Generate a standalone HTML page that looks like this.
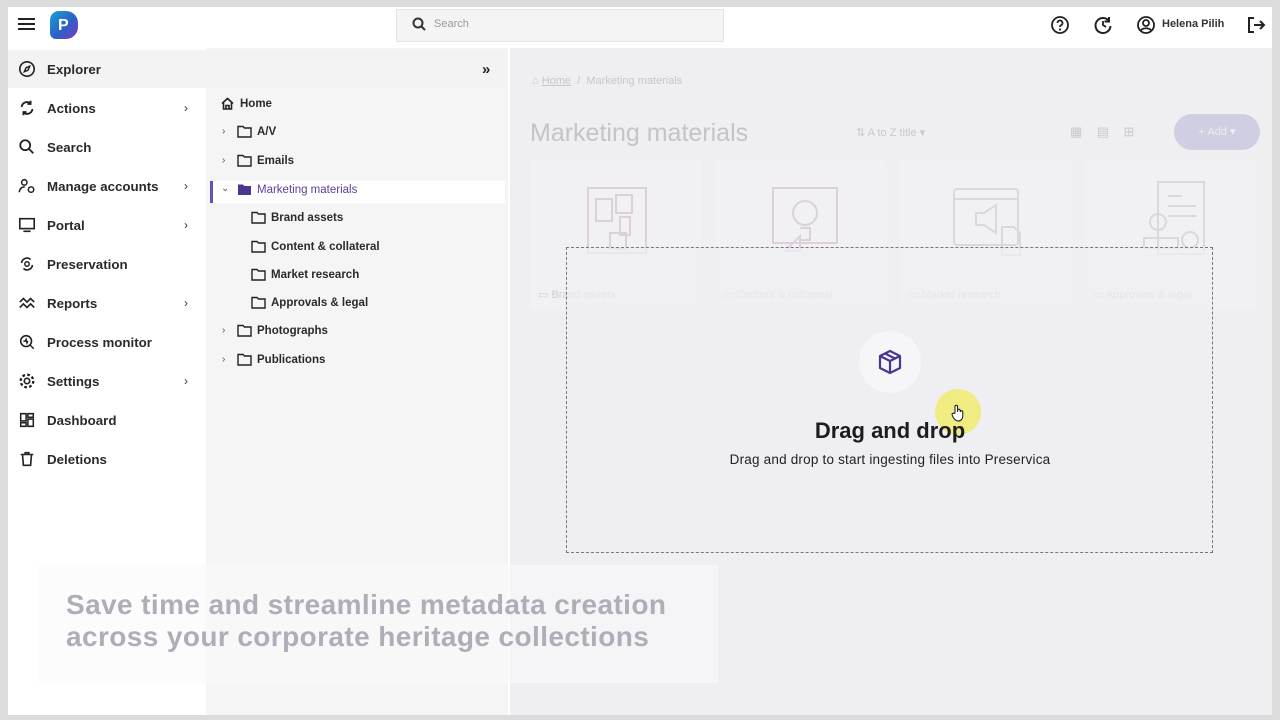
<!DOCTYPE html>
<html><head><meta charset="utf-8">
<style>
*{box-sizing:border-box;margin:0;padding:0}
body{width:1280px;height:720px;background:#dcdcdc;font-family:"Liberation Sans",sans-serif;position:relative;overflow:hidden;color:#222}
.abs{position:absolute}
#frame{left:8px;top:7px;width:1264px;height:708px;background:#fff;overflow:hidden}
.hdr{left:0;top:0;width:1264px;height:41px;background:#fff}
.nav{left:0;top:41px;width:198px;height:667px;background:#fff}
.tree{left:198px;top:41px;width:302px;height:667px;background:#f5f5f6}
.main{left:502px;top:41px;width:762px;height:667px;background:#efeff1}
.ni{position:absolute;left:10px;font-size:13.3px;font-weight:bold;color:#2a2a2a;display:flex;align-items:center}
.ni svg{width:18px;height:18px;margin-right:11px}
.chev{position:absolute;left:176px;font-size:12px;color:#333}
.ti{position:absolute;font-size:11.5px;font-weight:bold;color:#2a2a2a;display:flex;align-items:center}
.ti svg{width:15px;height:13px;margin-right:5px}
.tc{position:absolute;font-size:10px;color:#555}
.card{position:absolute;top:112px;width:172px;height:150px;border-radius:4px;background:#f1f1f3}
.cl{position:absolute;top:240px;font-size:11px;color:#cdcdd2}
</style></head><body>
<div id="frame" class="abs">
 <div class="abs hdr">
  <svg class="abs" style="left:10px;top:10px" width="17" height="14"><path d="M0 2h17M0 7h17M0 12h17" stroke="#222" stroke-width="2"/></svg>
  <div class="abs" style="left:42px;top:4px;width:28px;height:28px;border-radius:9px 12px 12px 6px;background:linear-gradient(135deg,#18a3d8,#2c5fc8 55%,#7b3bbf)"></div>
  <div class="abs" style="left:50px;top:10px;color:#fff;font-weight:bold;font-size:16px">P</div>
  <div class="abs" style="left:388px;top:2px;width:328px;height:33px;background:#f4f4f5;border:1px solid #e4e4e6"></div>
  <svg class="abs" style="left:404px;top:10px" width="14" height="14"><circle cx="6" cy="6" r="4.5" stroke="#333" stroke-width="2" fill="none"/><path d="M9.5 9.5L13 13" stroke="#333" stroke-width="2"/></svg>
  <div class="abs" style="left:426px;top:11px;font-size:11px;color:#999">Search</div>
  <svg class="abs" style="left:1042px;top:8px" width="20" height="20"><circle cx="10" cy="10" r="8" stroke="#222" stroke-width="1.8" fill="none"/><path d="M7.5 8a2.5 2.5 0 1 1 3.5 2.3c-.8.4-1 .9-1 1.7" stroke="#222" stroke-width="1.8" fill="none"/><circle cx="10" cy="14.5" r="1.1" fill="#222"/></svg>
  <svg class="abs" style="left:1085px;top:8px" width="20" height="20"><path d="M16 6A7.5 7.5 0 1 0 17.5 11" stroke="#222" stroke-width="2" fill="none"/><path d="M16 2v4.5h-4.5" stroke="#222" stroke-width="2" fill="none"/><path d="M10 6v4l3 2" stroke="#222" stroke-width="1.8" fill="none"/></svg>
  <svg class="abs" style="left:1128px;top:8px" width="20" height="20"><circle cx="10" cy="10" r="8" stroke="#222" stroke-width="1.8" fill="none"/><circle cx="10" cy="8" r="3" stroke="#222" stroke-width="1.8" fill="none"/><path d="M4.5 15.5c3-3 8-3 11 0" stroke="#222" stroke-width="1.8" fill="none"/></svg>
  <div class="abs" style="left:1154px;top:11px;font-size:11px;font-weight:bold;color:#333">Helena Pilih</div>
  <svg class="abs" style="left:1238px;top:8px" width="20" height="20"><path d="M8 3H3v14h5" stroke="#222" stroke-width="2" fill="none"/><path d="M8 10h10M14 6l4 4-4 4" stroke="#222" stroke-width="2" fill="none"/></svg>
 </div>
 <div class="abs nav"></div>
 <div class="abs tree"></div>
 <div class="abs" style="left:0;top:43px;width:500px;height:38px;background:#f3f3f4"></div>
 <div class="abs" style="left:474px;top:54px;font-size:15px;font-weight:bold">»</div>
 <div class="ni" style="top:53px"><svg viewBox="0 0 20 20"><circle cx="10" cy="10" r="8" stroke="#222" stroke-width="1.8" fill="none"/><path d="M13 7l-2 4.5L7 13l2-4.5z" stroke="#222" stroke-width="1.6" fill="none"/></svg>Explorer</div>
 <div class="ni" style="top:92px"><svg viewBox="0 0 20 20"><path d="M4 9a6 6 0 0 1 10-4M16 11a6 6 0 0 1-10 4" stroke="#222" stroke-width="2" fill="none"/><path d="M14 2v3.5h-3.5M6 18v-3.5h3.5" stroke="#222" stroke-width="2" fill="none"/></svg>Actions</div><div class="chev" style="top:94px">›</div>
 <div class="ni" style="top:131px"><svg viewBox="0 0 20 20"><circle cx="8" cy="8" r="5.5" stroke="#222" stroke-width="2" fill="none"/><path d="M12 12l5 5" stroke="#222" stroke-width="2"/></svg>Search</div>
 <div class="ni" style="top:170px"><svg viewBox="0 0 20 20"><circle cx="7" cy="6" r="3" stroke="#222" stroke-width="1.7" fill="none"/><path d="M1.5 17c0-4 3-6 6-6" stroke="#222" stroke-width="1.7" fill="none"/><circle cx="14.5" cy="14" r="3" stroke="#222" stroke-width="1.7" fill="none"/></svg>Manage accounts</div><div class="chev" style="top:172px">›</div>
 <div class="ni" style="top:209px"><svg viewBox="0 0 20 20"><rect x="2" y="3" width="16" height="11" stroke="#222" stroke-width="1.8" fill="none"/><path d="M6 17h8" stroke="#222" stroke-width="1.8"/></svg>Portal</div><div class="chev" style="top:211px">›</div>
 <div class="ni" style="top:248px"><svg viewBox="0 0 20 20"><path d="M4 9a6 6 0 0 1 10-4M16 11a6 6 0 0 1-10 4" stroke="#222" stroke-width="1.8" fill="none"/><circle cx="10" cy="10" r="2.5" stroke="#222" stroke-width="1.6" fill="none"/></svg>Preservation</div>
 <div class="ni" style="top:287px"><svg viewBox="0 0 20 20"><path d="M2 9l4-4 4 4 4-4 4 4M2 15l4-4 4 4 4-4 4 4" stroke="#222" stroke-width="1.8" fill="none"/></svg>Reports</div><div class="chev" style="top:289px">›</div>
 <div class="ni" style="top:326px"><svg viewBox="0 0 20 20"><circle cx="9" cy="9" r="6" stroke="#222" stroke-width="1.8" fill="none"/><path d="M13.5 13.5l4 4M6 9h2l1-2 1 4 1-2" stroke="#222" stroke-width="1.6" fill="none"/></svg>Process monitor</div>
 <div class="ni" style="top:365px"><svg viewBox="0 0 20 20"><circle cx="10" cy="10" r="3" stroke="#222" stroke-width="1.8" fill="none"/><circle cx="10" cy="10" r="7" stroke="#222" stroke-width="2.6" stroke-dasharray="3 2.5" fill="none"/></svg>Settings</div><div class="chev" style="top:367px">›</div>
 <div class="ni" style="top:404px"><svg viewBox="0 0 20 20"><path d="M3 3h6v8H3zM11 3h6v4h-6zM11 9h6v8h-6zM3 13h6v4H3z" stroke="#222" stroke-width="1.7" fill="none"/></svg>Dashboard</div>
 <div class="ni" style="top:443px"><svg viewBox="0 0 20 20"><path d="M3 5h14M8 5V3h4v2M5 5l1 12h8l1-12" stroke="#222" stroke-width="1.8" fill="none"/></svg>Deletions</div>

 <div class="ti" style="left:212px;top:90px"><svg viewBox="0 0 15 13"><path d="M2 6.5L7.5 1.5 13 6.5M3.5 5.5V12h8V5.5M6 12V8.5h3V12" stroke="#222" stroke-width="1.6" fill="none"/></svg>Home</div>
 <div class="abs" style="left:202px;top:174px;width:295px;height:22px;background:#fff;border-left:3px solid #6a4fb5"></div>
 <div class="tc" style="left:214px;top:119px">›</div><div class="ti" style="left:229px;top:118px"><svg viewBox="0 0 15 13"><path d="M1 1.5h5l1.5 1.5H14v9H1z" stroke="#222" stroke-width="1.4" fill="none"/></svg>A/V</div>
 <div class="tc" style="left:214px;top:148px">›</div><div class="ti" style="left:229px;top:147px"><svg viewBox="0 0 15 13"><path d="M1 1.5h5l1.5 1.5H14v9H1z" stroke="#222" stroke-width="1.4" fill="none"/></svg>Emails</div>
 <div class="tc" style="left:213px;top:176px">⌄</div><div class="ti" style="left:229px;top:176px;color:#5a3f9e;font-weight:normal"><svg viewBox="0 0 15 13"><path d="M1 1.5h5l1.5 1.5H14v9H1z" fill="#4a3590"/></svg>Marketing materials</div>
 <div class="ti" style="left:243px;top:204px"><svg viewBox="0 0 15 13"><path d="M1 1.5h5l1.5 1.5H14v9H1z" stroke="#222" stroke-width="1.4" fill="none"/></svg>Brand assets</div>
 <div class="ti" style="left:243px;top:233px"><svg viewBox="0 0 15 13"><path d="M1 1.5h5l1.5 1.5H14v9H1z" stroke="#222" stroke-width="1.4" fill="none"/></svg>Content &amp; collateral</div>
 <div class="ti" style="left:243px;top:261px"><svg viewBox="0 0 15 13"><path d="M1 1.5h5l1.5 1.5H14v9H1z" stroke="#222" stroke-width="1.4" fill="none"/></svg>Market research</div>
 <div class="ti" style="left:243px;top:289px"><svg viewBox="0 0 15 13"><path d="M1 1.5h5l1.5 1.5H14v9H1z" stroke="#222" stroke-width="1.4" fill="none"/></svg>Approvals &amp; legal</div>
 <div class="tc" style="left:214px;top:318px">›</div><div class="ti" style="left:229px;top:317px"><svg viewBox="0 0 15 13"><path d="M1 1.5h5l1.5 1.5H14v9H1z" stroke="#222" stroke-width="1.4" fill="none"/></svg>Photographs</div>
 <div class="tc" style="left:214px;top:347px">›</div><div class="ti" style="left:229px;top:346px"><svg viewBox="0 0 15 13"><path d="M1 1.5h5l1.5 1.5H14v9H1z" stroke="#222" stroke-width="1.4" fill="none"/></svg>Publications</div>

 <div class="abs main">
  <div class="abs" style="left:22px;top:27px;font-size:11px;color:#c6c6cc">⌂ <u>Home</u> &nbsp;/&nbsp; Marketing materials</div>
  <div class="abs" style="left:20px;top:71px;font-size:25px;color:#c3c3c9">Marketing materials</div>
  <div class="abs" style="left:346px;top:78px;font-size:11px;color:#c8c8ce">⇅ A to Z title ▾</div>
  <div class="abs" style="left:560px;top:76px;font-size:13px;color:#c8c8d0">▦ &nbsp;&nbsp; ▤ &nbsp;&nbsp; ⊞</div>
  <div class="abs" style="left:664px;top:66px;width:86px;height:36px;border-radius:18px;background:#cfcee2;color:#eee;font-size:11px;text-align:center;line-height:36px">+ Add ▾</div>
  <div class="card" style="left:20px"></div><div class="card" style="left:205px"></div><div class="card" style="left:390px"></div><div class="card" style="left:575px"></div>
  <svg class="abs" style="left:70px;top:135px" width="70" height="75" fill="none" stroke="#ddd0dc" stroke-width="2"><rect x="8" y="5" width="58" height="65"/><rect x="16" y="16" width="16" height="22"/><rect x="36" y="12" width="16" height="18"/><rect x="40" y="34" width="10" height="18"/><rect x="30" y="50" width="16" height="16"/></svg>
  <svg class="abs" style="left:255px;top:135px" width="80" height="75" fill="none" stroke="#ddd0dc" stroke-width="2"><rect x="8" y="5" width="64" height="55"/><circle cx="40" cy="30" r="12"/><path d="M35 45h10v12H35M20 68l15-15v15z"/></svg>
  <svg class="abs" style="left:440px;top:135px" width="80" height="80" fill="none" stroke="#d8d8de" stroke-width="2"><rect x="4" y="6" width="64" height="56" rx="3"/><path d="M4 16h64M26 30h8l12-8v28l-12-8h-8z"/><path d="M52 44h12l6 6v22H52z"/></svg>
  <svg class="abs" style="left:630px;top:130px" width="70" height="85" fill="none" stroke="#d8d8de" stroke-width="2"><rect x="18" y="4" width="46" height="72"/><path d="M28 18h14M28 28h28M28 38h28"/><circle cx="18" cy="44" r="8"/><rect x="4" y="60" width="34" height="10"/><circle cx="50" cy="62" r="8"/></svg>
  <div class="cl" style="left:28px">▭ Brand assets</div><div class="cl" style="left:213px">▭ Content &amp; collateral</div><div class="cl" style="left:398px">▭ Market research</div><div class="cl" style="left:583px">▭ Approvals &amp; legal</div>
  <div class="abs" style="left:56px;top:199px;width:647px;height:306px;border:1px dashed #777;background:rgba(240,240,243,.7)"></div>
  <div class="abs" style="left:349px;top:283px;width:62px;height:62px;border-radius:50%;background:#f6f6f8"></div>
  <svg class="abs" style="left:366px;top:300px" width="28" height="28" fill="none" stroke="#4a3590" stroke-width="2.2" stroke-linejoin="round"><path d="M14 3l10 5v12l-10 5-10-5V8zM4 8l10 5 10-5M14 13v12M9 5.5l10 5"/></svg>
  <div class="abs" style="left:425px;top:341px;width:46px;height:46px;border-radius:50%;background:rgba(240,235,80,.7)"></div>
  <div class="abs" style="left:290px;top:370px;width:180px;text-align:center;font-size:22px;font-weight:bold;color:#1d1d1d">Drag and drop</div>
  <div class="abs" style="left:190px;top:404px;width:380px;text-align:center;font-size:13.5px;color:#222;letter-spacing:0.2px">Drag and drop to start ingesting files into Preservica</div>
  <svg class="abs" style="left:441px;top:356px" width="14" height="18"><path d="M4 9V2.5a1.3 1.3 0 0 1 2.6 0V8v-1.5a1.3 1.3 0 0 1 2.6 0V8a1.3 1.3 0 0 1 2.6 0v4c0 3-2 5-4.5 5S3.5 15.5 2 13L1 10.5a1.2 1.2 0 0 1 2-1z" fill="#fff" stroke="#111" stroke-width="1"/></svg>
 </div>
 <div class="abs" style="left:30px;top:558px;width:680px;height:118px;background:rgba(250,250,252,.55)"></div>
 <div class="abs" style="left:58px;top:582px;font-size:28px;font-weight:bold;color:#aeaeb8;line-height:32px;letter-spacing:0.4px;white-space:nowrap">Save time and streamline metadata creation<br>across your corporate heritage collections</div>
</div>
</body></html>
